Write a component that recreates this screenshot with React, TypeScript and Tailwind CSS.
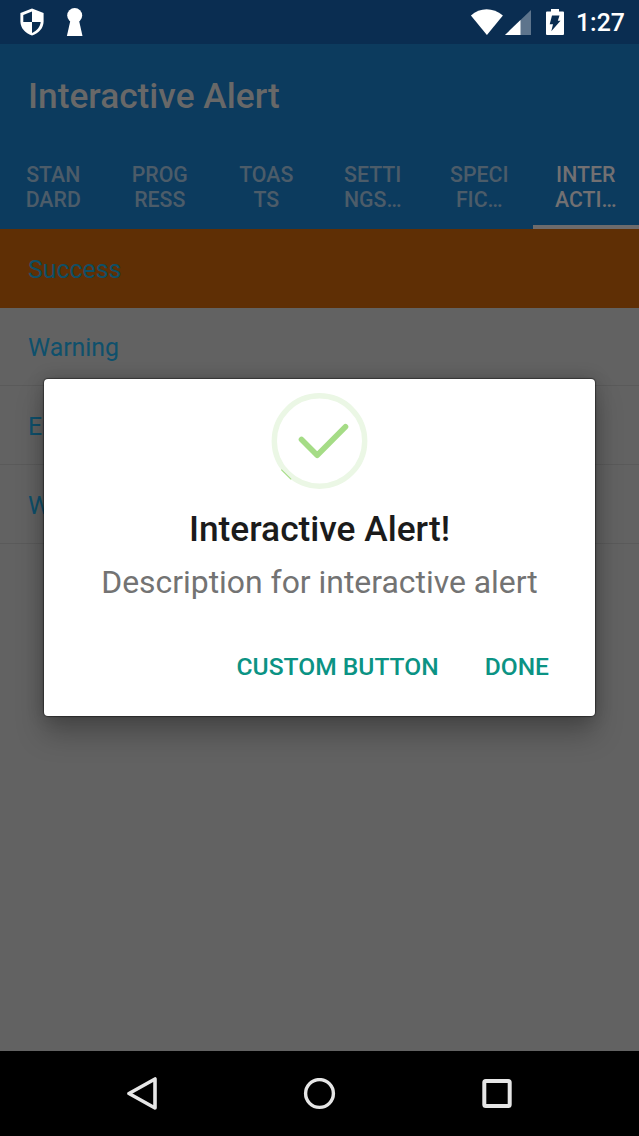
import React from "react";

const tabs: { lines: [string, string]; active?: boolean }[] = [
  { lines: ["STAN", "DARD"] },
  { lines: ["PROG", "RESS"] },
  { lines: ["TOAS", "TS"] },
  { lines: ["SETTI", "NGS…"] },
  { lines: ["SPECI", "FIC…"] },
  { lines: ["INTER", "ACTI…"], active: true },
];

const items = ["Success", "Warning", "Error", "Wait"];

function StatusBar() {
  return (
    <div className="flex h-11 shrink-0 items-center bg-[#0a2d51] pl-[19px] pr-[14px] text-white">
      <svg width="26" height="30" viewBox="0 0 26 30" fill="none">
        <path d="M13 1.500 24.600 6v8.500c0 6.500-4.700 11.500-11.600 14C6.100 26 1.400 21 1.400 14.500V6Z" fill="#fff" />
        <path d="M13 4.500V15H4.300V8Z" fill="#0a2d51" />
        <path d="M13 15h8.700c-.6 5-3.700 8.500-8.700 11Z" fill="#0a2d51" />
      </svg>
      <svg className="ml-[21px]" width="18" height="30" viewBox="0 0 18 30" fill="#fff">
        <circle cx="8.700" cy="8.500" r="7.500" />
        <path d="M4.500 13h8.400l3.600 16H.9Z" />
      </svg>
      <div className="flex-1" />
      <svg width="33" height="26" viewBox="0 0 33 26" fill="#fff">
        <path d="M.9 6.500C10-1.700 23-1.700 32.900 6.500L16.900 26Z" />
      </svg>
      <svg className="ml-[2px]" width="26" height="25" viewBox="0 0 26 25">
        <path d="M26 0v25H0Z" fill="#fff" fillOpacity=".34" />
        <path d="M15.500 10v15H0Z" fill="#fff" />
      </svg>
      <svg className="ml-[15px]" width="18" height="26" viewBox="0 0 18 26">
        <path d="M5 0h8v2.500h4q1 0 1 1V25q0 1-1 1H1q-1 0-1-1V3.500q0-1 1-1h4Z" fill="#fff" />
        <path d="M6 6.500h7.500l-1.700 5.200H14.500L5.300 22.300l1.700-7H3.700Z" fill="#0a2d51" />
      </svg>
      <span className="ml-[12px] mt-[2px] w-[49px] whitespace-nowrap text-[24.850px] font-medium leading-[30px]">1:27</span>
    </div>
  );
}

function Header() {
  return (
    <header className="flex h-[185px] shrink-0 flex-col bg-[#0c3b5e]">
      <h1 className="flex h-[102px] items-center pl-[28px] pt-[3px] text-[35.300px] font-medium text-[#686868]">
        <span>Interactive Alert</span>
      </h1>
      <nav className="grid flex-1 grid-cols-6">
        {tabs.map((tab) => (
          <div
            key={tab.lines[0]}
            className={
              tab.active
                ? "flex flex-col items-center border-b-4 border-[#6d6b6c] pt-[17px] text-[#727072]"
                : "flex flex-col items-center border-b-4 border-transparent pt-[17px] text-[#4c5c69]"
            }
          >
            {tab.lines.map((line) => (
              <span key={line} className="whitespace-nowrap text-[21.300px] font-medium leading-[24.500px]">
                {line}
              </span>
            ))}
          </div>
        ))}
      </nav>
    </header>
  );
}

function AlertDialog() {
  return (
    <div
      role="dialog"
      className="absolute left-[44px] top-[379px] flex h-[336.500px] w-[551px] flex-col items-center rounded-[4px] bg-white shadow-[0_0_1px_1px_rgba(0,0,0,0.4),0_18px_28px_rgba(0,0,0,0.25),0_0_18px_rgba(0,0,0,0.2)]"
    >
      <svg className="mt-[14px] shrink-0" width="97" height="96" viewBox="-0.5 0 97 96" fill="none">
        <circle cx="48" cy="48" r="45.200" stroke="#ebf7e5" strokeWidth="5.400" />
        <path d="M9.800 76.700 19.700 86.300" stroke="#a5dc86" strokeWidth="1.100" />
        <path d="M30 46.500 45.700 62.200 74 33.800" stroke="#a5dc86" strokeWidth="5.600" strokeLinecap="round" strokeLinejoin="round" />
      </svg>
      <h2 className="mt-[18px] whitespace-nowrap text-[35.300px] font-medium leading-[44px] text-[#1b1b1b]">Interactive Alert!</h2>
      <p className="mt-[11px] whitespace-nowrap text-[31.900px] leading-[40px] text-[#737373]">Description for interactive alert</p>
      <div className="mt-[49px] flex w-full justify-end gap-[46px] pr-[46px] text-[24.600px] font-medium leading-[32px] text-[#0b9384]">
        <button className="whitespace-nowrap">CUSTOM BUTTON</button>
        <button className="whitespace-nowrap">DONE</button>
      </div>
    </div>
  );
}

function NavigationBar() {
  return (
    <footer className="flex h-[85px] shrink-0 items-center justify-between bg-black px-[126px]">
      <svg width="32" height="34" viewBox="0 0 32 34" fill="none" stroke="#e6e6e6" strokeWidth="3.600" strokeLinejoin="round">
        <path d="M3 16.500 29 2v29Z" />
      </svg>
      <svg width="33" height="32" viewBox="-0.5 0 33 32" fill="none" stroke="#e6e6e6" strokeWidth="3.400">
        <circle cx="16" cy="15.500" r="13.900" />
      </svg>
      <svg width="32" height="30" viewBox="0 0 32 30" fill="none" stroke="#e6e6e6" strokeWidth="4">
        <rect x="3.300" y="2" width="25.400" height="25" rx="1.500" />
      </svg>
    </footer>
  );
}

export default function App() {
  return (
    <div className="relative flex h-[1136px] w-[639px] flex-col overflow-hidden bg-[#626262] font-[Roboto,sans-serif]">
      <StatusBar />
      <Header />
      <ul className="flex-1">
        {items.map((item, i) => (
          <li
            key={item}
            className={
              i === 0
                ? "flex h-[78.670px] items-center border-b border-[#5f2f05] bg-[#5f2f05] pl-[28px] pt-[3px] text-[24.850px] text-[#0f4f66]"
                : "flex h-[78.670px] items-center border-b border-[#5a5a5a] pl-[28px] pt-[3px] text-[24.850px] text-[#0e506c]"
            }
          >
            <span>{item}</span>
          </li>
        ))}
      </ul>
      <NavigationBar />
      <AlertDialog />
    </div>
  );
}
